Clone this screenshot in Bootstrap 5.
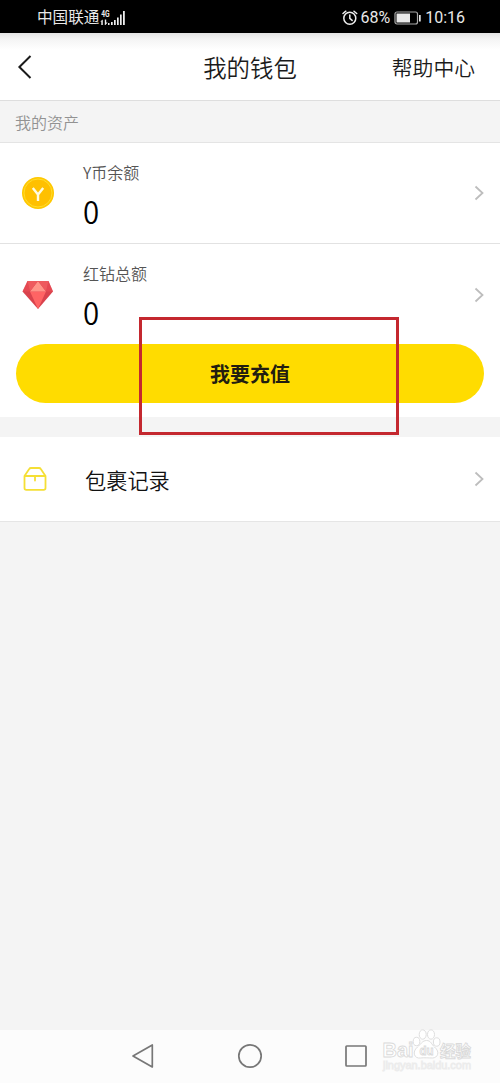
<!DOCTYPE html>
<html lang="zh-CN">
<head>
<meta charset="utf-8">
<meta name="viewport" content="width=device-width, initial-scale=1">
<title>我的钱包</title>
<link href="https://cdn.jsdelivr.net/npm/bootstrap@5.3.0/dist/css/bootstrap.min.css" rel="stylesheet">
<style>
body{font-family:"Noto Sans CJK SC",sans-serif;font-weight:350;background:#f4f4f4;color:#1b1b1b;height:1083px;overflow:hidden;line-height:1}
svg{display:block;flex:none}
.status{height:33px;background:#000;color:#e8e8e8;padding:1px 35px 0 37px}
.carrier{font-size:15.6px;font-weight:400}
.latin{font-family:Roboto,sans-serif;font-size:16px;font-weight:400;padding-top:2px}
.charge{margin-left:2px}
.clock{margin-left:4px}
.topbar{height:68px;padding:0 25px 0 17px;background:linear-gradient(#e4e4e4,#f4f4f4 6px,#fff 17px);border-bottom:1px solid #dedede}
.topbar h1{font-size:23.4px;font-weight:350;line-height:1;top:23px}
.help{font-size:20.8px;padding-top:1px}
.section-name{height:42px;padding-left:15px;font-size:16px;color:#929292;border-bottom:1px solid #e4e4e4}
.asset{height:101px;padding:0 15px 0 21px}
.asset-last{height:100px}
.asset-last>svg{margin-top:1px}
.asset-text{margin-left:28px}
.asset-label{font-size:16px;color:#555;margin-top:21px}
.amount{font-size:31px;color:#000;margin-top:15px}
.amount span{display:inline-block;transform:scaleX(.95);transform-origin:left}
.line{border-bottom:1px solid #e2e2e2}
.recharge{height:59px;margin:0 16px 14px;background:#ffdc00;font-size:20px;font-weight:700;color:#221d10;line-height:1}
.recharge:hover{background:#ffd400}
.records{height:85px;margin-top:20px;padding:0 15px 0 22px;font-size:21.2px;color:#111;border-bottom:1px solid #e5e5e5}
.records-name{margin-left:37px;padding-top:2px}
.marker{left:139px;top:317px;width:260px;height:118px;border:3px solid #c4282f;pointer-events:none}
.sysbar{height:53px;background:#fcfcfc}
.sysbar .keys{padding:0 0 1px 131px;gap:82px}
.sysbar .keys svg:last-child{margin-left:-1px}
.watermark{left:380px;top:-3px}
</style>
</head>
<body class="d-flex flex-column position-relative">
<div class="status d-flex align-items-center justify-content-between">
  <div class="d-flex align-items-center">
    <span class="carrier">中国联通</span>
    <svg width="27" height="20" viewBox="0 0 27 20" fill="#eee">
      <text x="2.2" y="9.8" font-family="Roboto" font-size="9.5" font-weight="700" textLength="8.4" lengthAdjust="spacingAndGlyphs">4G</text>
      <path d="M3.800 12.500v5.500H2.300v-3.400H1.200zM5.800 12.500h1.400v3h1.400L6.500 18h-.7zM9 16h1.500v2H9zM12 15h1.700v3H12zM15 13h1.700v5H15zM18 10.5h1.700V18H18zM21 7.5h1.700V18H21zM24 4h1.800v14H24z"/>
    </svg>
  </div>
  <div class="d-flex align-items-center latin">
    <svg width="16" height="16" viewBox="0 0 16 16" fill="none" stroke="#eee" stroke-width="1.5" stroke-linecap="round"><circle cx="7.8" cy="8.2" r="6"/><path d="M1 3.5 3.8 1.2M14.7 3.5 12 1.2M7.8 5v3.4l2.3 2"/></svg>
    <span class="charge">68%</span>
    <svg class="ms-1" width="27" height="14" viewBox="0 0 27 14"><rect x="1" y="1" width="22.5" height="12" rx="2" fill="none" stroke="#aaa" stroke-width="1.2"/><path fill="#e8e8e8" d="M2.5 2.5H16v9H2.5zM25 4h1.7v6.5H25z"/></svg>
    <span class="clock">10:16</span>
  </div>
</div>
<header class="topbar d-flex align-items-center justify-content-between position-relative">
  <svg width="16" height="26" viewBox="0 0 16 26" fill="none" stroke="#1b1b1b" stroke-width="2"><path d="M13.5 2 2.4 13l11.1 11"/></svg>
  <h1 class="m-0 position-absolute start-50 translate-middle-x">我的钱包</h1>
  <span class="help">帮助中心</span>
</header>
<div class="section-name d-flex align-items-center">我的资产</div>
<main class="bg-white">
  <div class="asset line d-flex">
    <svg class="align-self-center" width="34" height="34" viewBox="0 0 34 34"><circle cx="17" cy="17" r="16" fill="#ffc800"/><circle cx="17" cy="17" r="14" fill="#ffc000" stroke="#ffdc2e" stroke-width="1"/><path d="m11.800 12 5.200 6.500 5.200-6.500M17 18v7" fill="none" stroke="#fffbe2" stroke-width="2.400"/></svg>
    <div class="asset-text flex-grow-1"><div class="asset-label">Y币余额</div><div class="amount"><span>0</span></div></div>
    <svg class="align-self-center" width="11" height="16" viewBox="0 0 11 16" fill="none" stroke="#bdbdbd" stroke-width="1.800"><path d="m1.5 1.5 7 6.5-7 6.5"/></svg>
  </div>
  <div class="asset asset-last d-flex">
    <svg class="align-self-center" width="34" height="30" viewBox="0 0 34 30"><path fill="#d9434d" d="M6.5 1h21L32 11.5 17 29 1.5 11.5z"/><path fill="#f3535a" d="M6.5 1 9 11.5H1.5zM27.5 1 25 11.5h7z" opacity=".45"/><path fill="#ff6464" d="M9 11.5h16L17 29z"/><path fill="#ff9488" d="M17 1 25 11.5H9z"/><path fill="#ee5a5e" d="M6.5 1H17L9 11.5zM17 1h10.5L25 11.5z"/></svg>
    <div class="asset-text flex-grow-1"><div class="asset-label">红钻总额</div><div class="amount"><span>0</span></div></div>
    <svg class="align-self-center" width="11" height="16" viewBox="0 0 11 16" fill="none" stroke="#bdbdbd" stroke-width="1.800"><path d="m1.5 1.5 7 6.5-7 6.5"/></svg>
  </div>
  <div class="d-flex"><button class="recharge btn border-0 rounded-pill flex-grow-1 p-0" type="button">我要充值</button></div>
</main>
<div class="records bg-white d-flex align-items-center">
  <svg width="26" height="26" viewBox="0 0 26 26" fill="none" stroke="#f5df35" stroke-width="1.8" stroke-linejoin="round" stroke-linecap="round"><path d="M2.500 10v12q0 1.800 1.800 1.800h17.400q1.800 0 1.800-1.800V10L18.800 3q-.6-1-1.800-1H9Q7.800 2 7.200 3zM2.500 10h21M13 10v4.500"/></svg>
  <span class="records-name flex-grow-1">包裹记录</span>
  <svg width="11" height="16" viewBox="0 0 11 16" fill="none" stroke="#bdbdbd" stroke-width="1.800"><path d="m1.500 1.500 7 6.500-7 6.500"/></svg>
</div>
<div class="marker position-absolute"></div>
<footer class="sysbar mt-auto position-relative">
  <div class="keys h-100 d-flex align-items-center">
    <svg width="24" height="26" viewBox="0 0 24 26" fill="none" stroke="#777" stroke-width="1.700" stroke-linejoin="round"><path d="M21.300 2v22L2 13z"/></svg>
    <svg width="26" height="26" viewBox="0 0 26 26" fill="none" stroke="#777" stroke-width="1.700"><circle cx="13" cy="13" r="11.200"/></svg>
    <svg width="24" height="24" viewBox="0 0 24 24" fill="none" stroke="#777" stroke-width="1.700"><rect x="2" y="2" width="20" height="20" rx=".8"/></svg>
  </div>
  <svg class="watermark position-absolute" width="100" height="54" viewBox="0 0 100 54" fill="#fff" stroke="#dadada" stroke-width=".9">
    <text x="2.500" y="30" font-family="Liberation Sans, sans-serif" font-weight="700" font-size="21" textLength="31" lengthAdjust="spacingAndGlyphs">Bai</text>
    <ellipse cx="36.500" cy="14.500" rx="3.300" ry="4.200"/><ellipse cx="42.700" cy="7.500" rx="3.500" ry="4.700"/><ellipse cx="51" cy="7.500" rx="3.500" ry="4.700"/><ellipse cx="56.700" cy="15" rx="3.300" ry="4.200"/>
    <path d="M46.500 13.500c4.500 0 5 4 8 6.500 6 5 3 11-2 11-3 0-9-.5-12 0-6 1-9-6-3-11 3-2.500 5-6.500 9-6.500z"/>
    <text x="39.500" y="28" font-family="Liberation Sans, sans-serif" font-size="12.500" font-weight="700" textLength="14" lengthAdjust="spacingAndGlyphs">du</text>
    <text x="60" y="30" font-family="Noto Sans CJK SC, sans-serif" font-size="15.500" font-weight="700">经验</text>
    <text x="3" y="42" font-family="Liberation Sans, sans-serif" font-size="11" textLength="88" lengthAdjust="spacingAndGlyphs" stroke="#ececec">jingyan.baidu.com</text>
  </svg>
</footer>
<script src="https://cdn.jsdelivr.net/npm/bootstrap@5.3.0/dist/js/bootstrap.bundle.min.js"></script>
</body>
</html>
